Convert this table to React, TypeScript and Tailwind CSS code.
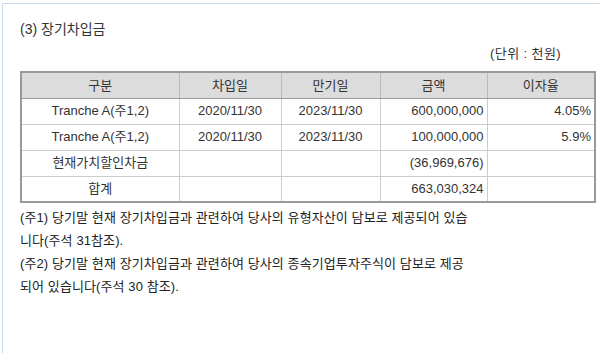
const rows = [
  { name: "Tranche A(주1,2)", start: "2020/11/30", end: "2023/11/30", amount: "600,000,000", rate: "4.05%" },
  { name: "Tranche A(주1,2)", start: "2020/11/30", end: "2023/11/30", amount: "100,000,000", rate: "5.9%" },
  { name: "현재가치할인차금", start: "", end: "", amount: "(36,969,676)", rate: "" },
  { name: "합계", start: "", end: "", amount: "663,030,324", rate: "" },
];

const font = { fontFamily: '"Liberation Sans", "Noto Sans CJK KR", sans-serif' };

const App = () => {
  return (
    <div className="w-[600px] h-[353px] overflow-hidden bg-white" style={font}>
      <div className="ml-[2px] mt-[3px] h-full border-l border-t border-[#c9d8ee] pl-[17px] pr-[6px] text-[#333]">
        <div className="pt-[15px] text-[14px] leading-[20px]">(3) 장기차입금</div>
        <div className="mt-[5px] pr-[33px] text-right text-[13px] leading-[20px] tracking-[0.4px]">(단위 : 천원)</div>
        <table className="mt-[7px] w-[574px] border-collapse border-2 border-[#999] text-[13px] table-fixed">
          <colgroup>
            <col className="w-[158px]" />
            <col className="w-[102px]" />
            <col className="w-[99px]" />
            <col className="w-[107px]" />
            <col className="w-[108px]" />
          </colgroup>
          <thead>
            <tr className="h-[26px] bg-[#dcdcdc]">
              {["구분", "차입일", "만기일", "금액", "이자율"].map((h) => (
                <th key={h} className="border border-[#bbb] border-b-[#999] font-normal">
                  {h}
                </th>
              ))}
            </tr>
          </thead>
          <tbody>
            {rows.map((r, i) => (
              <tr key={i} className="h-[26px]">
                <td className="border border-[#ccc] text-center">{r.name}</td>
                <td className="border border-[#ccc] text-center">{r.start}</td>
                <td className="border border-[#ccc] text-center">{r.end}</td>
                <td className="border border-[#ccc] text-right pr-[3px]">{r.amount}</td>
                <td className="border border-[#ccc] text-right pr-[3px]">{r.rate}</td>
              </tr>
            ))}
          </tbody>
        </table>
        <div className="mt-[3px] text-[13px] leading-[23px] tracking-[0.1px] text-[#222]">
          <div>(주1) 당기말 현재 장기차입금과 관련하여 당사의 유형자산이 담보로 제공되어 있습</div>
          <div>니다(주석 31참조).</div>
          <div>(주2) 당기말 현재 장기차입금과 관련하여 당사의 종속기업투자주식이 담보로 제공</div>
          <div>되어 있습니다(주석 30 참조).</div>
        </div>
        <div className="mt-[52px] text-[14px] leading-[20px]">(4) 전환사채</div>
      </div>
    </div>
  );
};

export default App;
